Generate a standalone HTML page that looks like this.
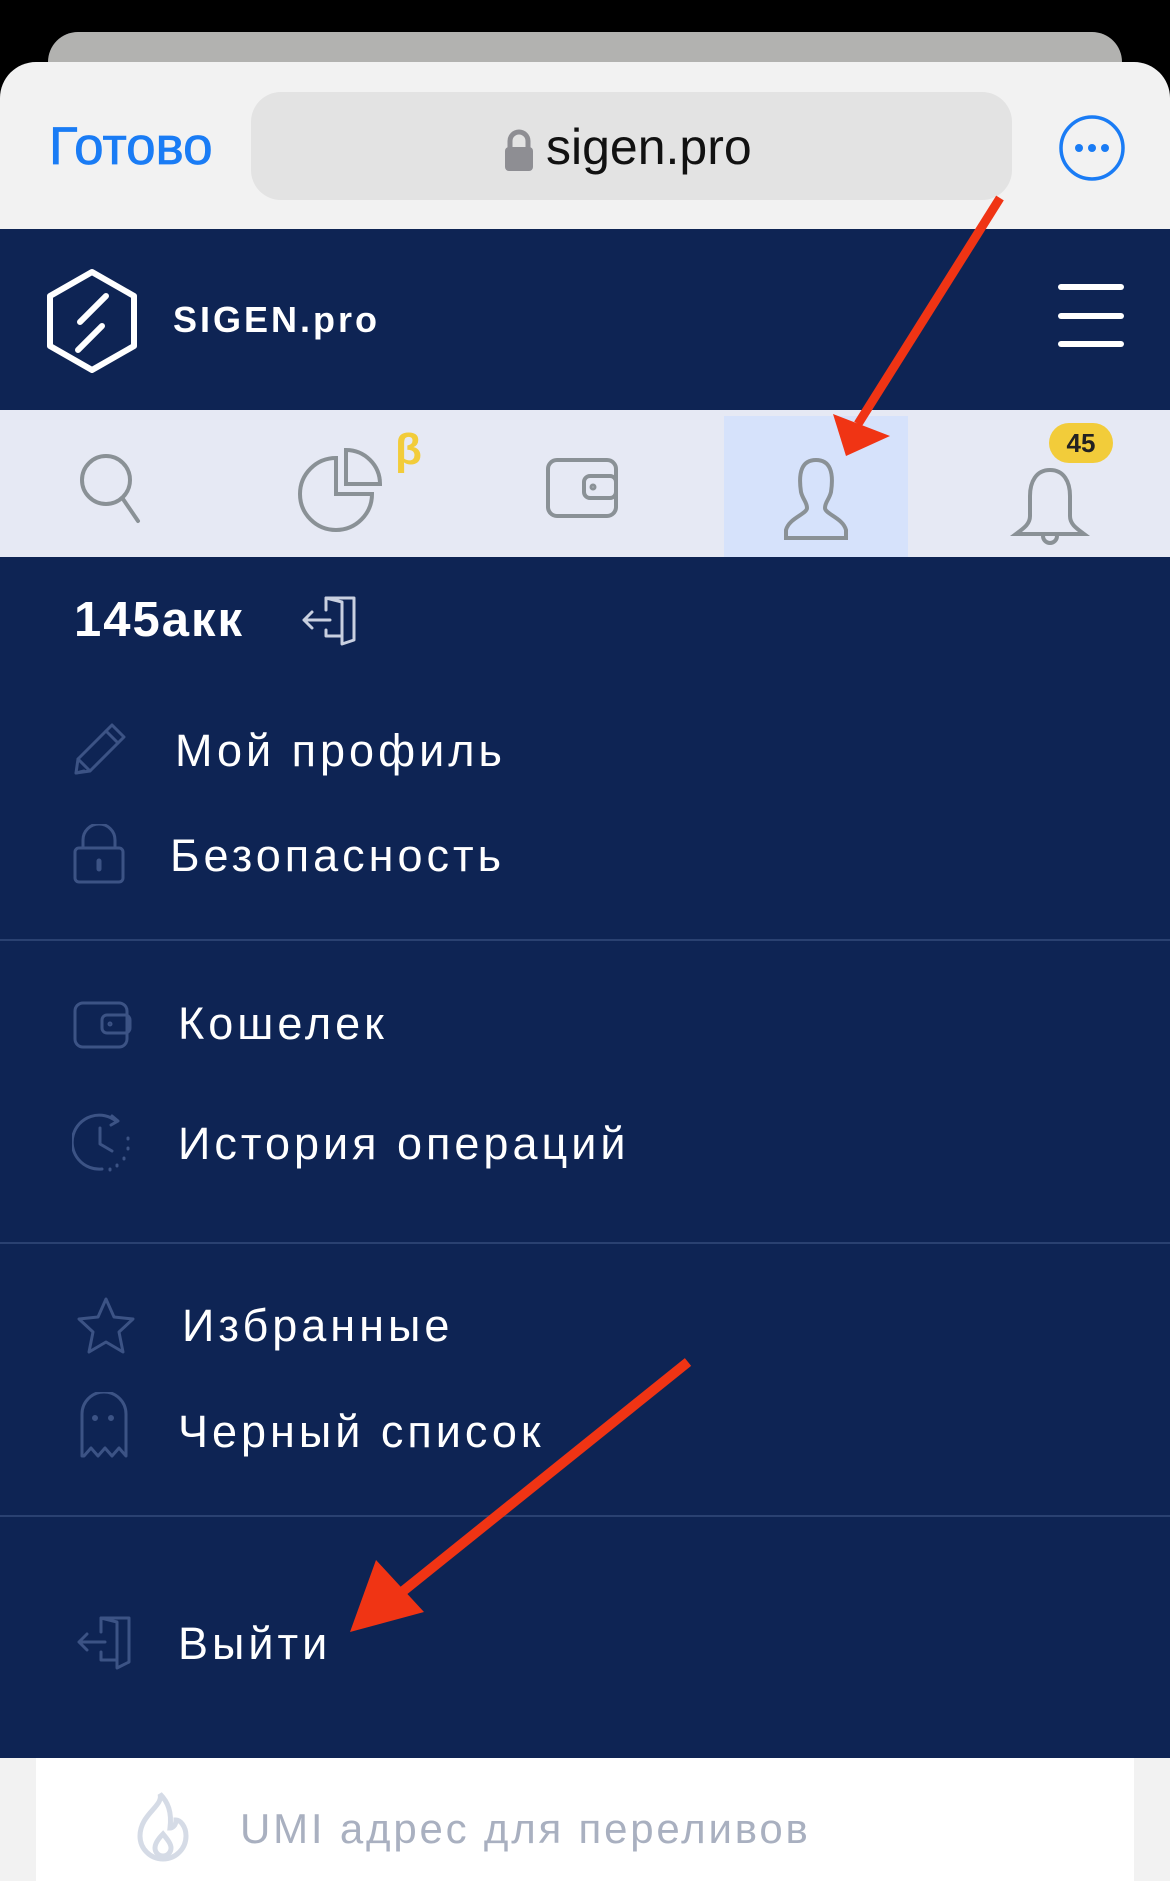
<!DOCTYPE html>
<html><head><meta charset="utf-8"><style>
*{margin:0;padding:0;box-sizing:border-box}
body{width:1170px;height:1881px;background:#000;position:relative;overflow:hidden;font-family:"Liberation Sans","DejaVu Sans",sans-serif}
.abs{position:absolute}
.item{position:absolute;color:#fff;font-size:45px;letter-spacing:4px;line-height:1;white-space:nowrap}
.div{position:absolute;left:0;width:1170px;height:2px;background:#2a4171}
.ic{position:absolute;fill:none;stroke:#3c5385;stroke-width:3;stroke-linecap:round;stroke-linejoin:round}
</style></head><body>
<div class="abs" style="left:48px;top:32px;width:1074px;height:60px;background:#b2b2b0;border-radius:30px 30px 0 0"></div>
<div class="abs" style="left:0;top:62px;width:1170px;height:180px;background:#f2f2f2;border-radius:36px 36px 0 0"></div>
<div class="abs" style="left:49px;top:120px;font-size:53px;color:#1a7cf5;line-height:1;-webkit-text-stroke:0.8px #1a7cf5">Готово</div>
<div class="abs" style="left:251px;top:92px;width:761px;height:108px;background:#e3e3e3;border-radius:30px"></div>
<svg class="abs" style="left:503px;top:128px" width="32" height="44" viewBox="0 0 32 44"><path d="M7 20V13a9 9 0 0118 0v7" fill="none" stroke="#8e8e93" stroke-width="5"/><rect x="2" y="19" width="28" height="24" rx="4" fill="#8e8e93"/></svg>
<div class="abs" style="left:546px;top:122px;font-size:50px;color:#111;line-height:1">sigen.pro</div>
<svg class="abs" style="left:1058px;top:114px" width="68" height="68"><circle cx="34" cy="34" r="31" fill="none" stroke="#1a7cf5" stroke-width="3.5"/><circle cx="21" cy="34" r="4" fill="#1a7cf5"/><circle cx="34" cy="34" r="4" fill="#1a7cf5"/><circle cx="47" cy="34" r="4" fill="#1a7cf5"/></svg>
<div class="abs" style="left:0;top:229px;width:1170px;height:181px;background:#0e2454"></div>
<svg class="abs" style="left:44px;top:268px" width="96" height="106" viewBox="0 0 96 106"><path d="M48 4L90 28V78L48 102L6 78V28Z" fill="none" stroke="#fff" stroke-width="6" stroke-linejoin="round"/><path d="M62 28L36 54M58 58L34 82" stroke="#fff" stroke-width="6" stroke-linecap="round"/></svg>
<div class="abs" style="left:173px;top:302px;font-size:36px;font-weight:bold;color:#fff;letter-spacing:3px;line-height:1">SIGEN.pro</div>
<div class="abs" style="left:1058px;top:284px;width:66px;height:6px;background:#fff;border-radius:3px"></div>
<div class="abs" style="left:1058px;top:313px;width:66px;height:6px;background:#fff;border-radius:3px"></div>
<div class="abs" style="left:1058px;top:341px;width:66px;height:6px;background:#fff;border-radius:3px"></div>
<div class="abs" style="left:0;top:410px;width:1170px;height:147px;background:#e6e9f4"></div>
<div class="abs" style="left:724px;top:416px;width:184px;height:141px;background:#d6e2fb"></div>
<svg class="abs" style="left:0;top:410px" width="1170" height="147" fill="none" stroke="#8a9196" stroke-width="4" stroke-linecap="round">
<circle cx="106" cy="70" r="24"/><path d="M123 89L138 111"/>
<path d="M336 48a36 36 0 1036 36H336Z"/><path d="M346 40a34 34 0 0134 34H346Z"/>
<rect x="548" y="50" width="68" height="56" rx="9"/><rect x="584" y="66" width="32" height="22" rx="6"/><circle cx="593" cy="77" r="1.5"/>
<path d="M816 50c-14 0-18 12-15 32 2 8 6 10 6 16 0 6-18 10-21 22v8h60v-8c-3-12-21-16-21-22 0-6 4-8 6-16 3-20-1-32-15-32Z"/>
<path d="M1050 60c-14 0-20 12-20 26v20c0 8-6 12-14 18h68c-8-6-14-10-14-18V86c0-14-6-26-20-26Z"/><path d="M1043 126a7 7 0 0014 0"/>
</svg>
<div class="abs" style="left:395px;top:428px;font-size:44px;color:#f2cc3a;font-weight:bold;line-height:1">β</div>
<div class="abs" style="left:1049px;top:423px;width:64px;height:40px;border-radius:20px;background:#f2cc3a;font-size:26px;font-weight:bold;color:#222;text-align:center;line-height:40px">45</div>
<div class="abs" style="left:0;top:557px;width:1170px;height:1201px;background:#0e2454"></div>
<div class="abs" style="left:74px;top:596px;font-size:49px;font-weight:bold;color:#fff;letter-spacing:2px;line-height:1">145акк</div>
<svg class="ic" style="left:300px;top:590px;stroke:#c9d0e0" width="60" height="60"><path d="M26 8h28v42l-12 4V12z"/><path d="M26 8v12M26 40v6h16"/><path d="M30 30H4M12 22l-8 8 8 8"/></svg>
<svg class="ic" style="left:72px;top:723px" width="58" height="54"><path d="M4 50l2-14L40 2l12 12L18 48z"/><path d="M34 8l12 12M6 36l12 12M4 50l8-2"/></svg>
<svg class="ic" style="left:72px;top:824px" width="56" height="60"><rect x="3" y="24" width="48" height="34" rx="4"/><path d="M11 24v-8a16 16 0 0132 0v8"/><path d="M27 37v8" stroke-width="5"/></svg>
<svg class="ic" style="left:72px;top:1000px" width="62" height="50"><rect x="3" y="3" width="52" height="44" rx="8"/><rect x="30" y="15" width="28" height="18" rx="5"/><circle cx="38" cy="24" r="1"/></svg>
<svg class="ic" style="left:72px;top:1112px" width="62" height="62"><path d="M44 9A27 27 0 1 0 30 57"/><path d="M40 4l6 5-7 4"/><path d="M28 16v16l12 7"/><path d="M56 26v1M56 36v1M52 46v1M45 53v1M38 57v1"/></svg>
<svg class="ic" style="left:75px;top:1296px" width="62" height="60"><path d="M31 3l8 18 19 2-14 13 4 20-17-10-17 10 4-20L4 23l19-2z"/></svg>
<svg class="ic" style="left:78px;top:1392px" width="52" height="68"><path d="M4 64V22a22 22 0 0144 0v42l-7-8-7 8-7-8-7 8-7-8-7 8z"/><circle cx="17" cy="26" r="1.5"/><circle cx="33" cy="26" r="1.5"/></svg>
<svg class="ic" style="left:75px;top:1612px" width="60" height="60"><path d="M26 6h28v44l-12 6V10z"/><path d="M26 6v14M26 40v8h16"/><path d="M30 30H4M12 22l-8 8 8 8"/></svg>
<div class="item" style="left:175px;top:728px">Мой профиль</div>
<div class="item" style="left:170px;top:833px">Безопасность</div>
<div class="div" style="top:939px"></div>
<div class="item" style="left:178px;top:1001px">Кошелек</div>
<div class="item" style="left:178px;top:1121px">История операций</div>
<div class="div" style="top:1242px"></div>
<div class="item" style="left:182px;top:1303px">Избранные</div>
<div class="item" style="left:178px;top:1409px">Черный список</div>
<div class="div" style="top:1515px"></div>
<div class="item" style="left:178px;top:1621px">Выйти</div>
<div class="abs" style="left:0;top:1758px;width:1170px;height:123px;background:#f2f2f2"></div>
<div class="abs" style="left:36px;top:1758px;width:1098px;height:123px;background:#fff"></div>
<svg class="abs" style="left:132px;top:1790px" width="62" height="72" fill="none" stroke="#d5dbe6" stroke-width="5"><path d="M28 4c4 12-20 20-20 42a23 23 0 0046 0c0-10-6-16-10-16 0 6-4 8-6 8 2-16-2-26-10-34z"/><path d="M31 44c-6 6-8 10-8 14a8 8 0 0016 0c0-4-3-8-8-14z"/></svg>
<div class="abs" style="left:240px;top:1808px;font-size:42px;color:#a9b0c0;letter-spacing:2.8px;line-height:1">UMI адрес для переливов</div>
<svg class="abs" style="left:0;top:0" width="1170" height="1881">
<path d="M1000 198L858 424" stroke="#f03414" stroke-width="9"/><polygon points="846,456 833,414 890,436" fill="#f03414"/>
<path d="M688 1362L392 1600" stroke="#f03414" stroke-width="10"/><polygon points="350,1632 376,1560 424,1612" fill="#f03414"/>
</svg>
</body></html>
